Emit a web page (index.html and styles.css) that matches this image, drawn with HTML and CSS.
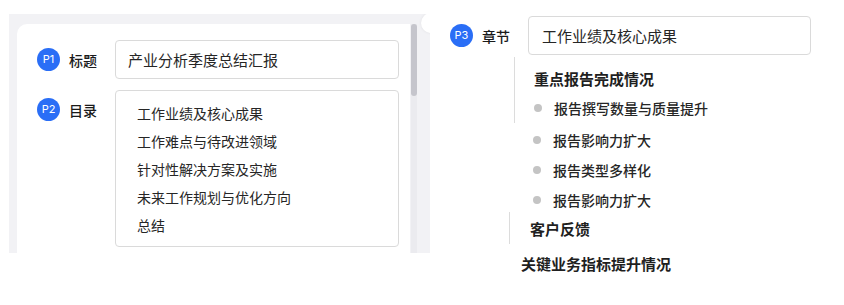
FILE: index.html
```html
<!DOCTYPE html>
<html lang="zh">
<head>
  <meta charset="utf-8">
  <title>报告大纲</title>
  <link rel="stylesheet" href="styles.css">
</head>
<body>
  <div class="page">

    <div class="panel">
      <div class="card">
        <div class="field">
          <div class="field-head">
            <span class="badge">P1</span>
            <span class="field-label">标题</span>
          </div>
          <div class="input">产业分析季度总结汇报</div>
        </div>
        <div class="field">
          <div class="field-head">
            <span class="badge">P2</span>
            <span class="field-label">目录</span>
          </div>
          <ul class="toc">
            <li>工作业绩及核心成果</li>
            <li>工作难点与待改进领域</li>
            <li>针对性解决方案及实施</li>
            <li>未来工作规划与优化方向</li>
            <li>总结</li>
          </ul>
        </div>
      </div>
      <div class="scrollbar"><div class="thumb"></div></div>
      <div class="float-btn"><i></i><i></i><i></i></div>
    </div>

    <div class="chapter">
      <div class="field chapter-field">
        <div class="field-head">
          <span class="badge">P3</span>
          <span class="field-label">章节</span>
        </div>
        <div class="input input-wide">工作业绩及核心成果</div>
      </div>

      <div class="tree-group first">
        <div class="tree-title">重点报告完成情况</div>
        <div class="bullet first-bullet">报告撰写数量与质量提升</div>
      </div>
      <div class="bullet loose second">报告影响力扩大</div>
      <div class="bullet loose">报告类型多样化</div>
      <div class="bullet loose">报告影响力扩大</div>
      <div class="tree-group second-group">
        <div class="tree-sub">客户反馈</div>
      </div>
      <div class="tree-title last">关键业务指标提升情况</div>
    </div>

  </div>
</body>
</html>
```

FILE: styles.css
```css
body {
  margin: 0;
  background: #ffffff;
  color: #222222;
  font-family: "Noto Sans CJK SC", "Noto Sans", sans-serif;
}
.page {
  display: flex;
  align-items: flex-start;
  padding-left: 9px;
}

/* left panel */
.panel {
  position: relative;
  display: flex;
  width: 421px;
  height: 239px;
  margin-top: 14px;
  padding: 10px 0 0 8px;
  box-sizing: border-box;
  background: #f2f2f5;
  overflow: hidden;
}
.card {
  width: 393px;
  height: 260px;
  padding: 16px 11px 0 20px;
  box-sizing: border-box;
  background: #ffffff;
  border-radius: 10px 0 0 0;
}
.scrollbar {
  width: 6px;
  margin-left: 1px;
  background: #ebebef;
}
.thumb {
  height: 72px;
  background: #c5c5cc;
  border-radius: 3px;
}
.float-btn {
  position: absolute;
  left: 412px;
  top: -1px;
  width: 20px;
  height: 20px;
  border-radius: 50%;
  background: #ffffff;
  box-shadow: 0 0 3px rgba(0, 0, 0, 0.08);
  display: flex;
  flex-direction: column;
  align-items: center;
  justify-content: center;
  gap: 2px;
}
.float-btn i {
  display: block;
  width: 1px;
  height: 1px;
  background: #999999;
}

/* fields */
.field {
  display: flex;
  align-items: flex-start;
  margin-bottom: 11px;
}
.field-head {
  display: flex;
  align-items: center;
  gap: 9px;
  width: 78px;
  height: 39px;
  flex-shrink: 0;
}
.badge {
  width: 23px;
  height: 23px;
  border-radius: 50%;
  background: #2a6ef6;
  color: #ffffff;
  font-family: "Inter", "Noto Sans", sans-serif;
  font-size: 11px;
  line-height: 23px;
  text-align: center;
}
.field-label {
  font-size: 14px;
  font-weight: 500;
  color: #1a1a1a;
}
.input {
  width: 284px;
  height: 39px;
  padding-left: 12px;
  box-sizing: border-box;
  border: 1px solid #dadada;
  border-radius: 4px;
  font-size: 15px;
  line-height: 37px;
  color: #262626;
}
.toc {
  width: 284px;
  margin: 0;
  padding: 8px 0 7px 21px;
  box-sizing: border-box;
  list-style: none;
  border: 1px solid #dadada;
  border-radius: 4px;
}
.toc li {
  font-size: 14px;
  line-height: 28px;
  color: #262626;
}

/* chapter side */
.chapter {
  padding: 16px 0 0 20px;
  width: 394px;
}
.chapter-field {
  margin-bottom: 2px;
}
.input-wide {
  width: 283px;
  padding-left: 13px;
}
.tree-group {
  border-left: 1px solid #dcdcdc;
}
.tree-group.first {
  margin-left: 64px;
  height: 66px;
  padding: 11px 0 0 19px;
  box-sizing: border-box;
}
.tree-title {
  font-size: 15px;
  font-weight: 600;
  line-height: 22px;
  color: #1f1f1f;
}
.bullet {
  display: flex;
  align-items: center;
  gap: 12px;
  font-size: 14px;
  font-weight: 500;
  line-height: 22px;
  color: #262626;
}
.bullet::before {
  content: "";
  width: 8px;
  height: 8px;
  border-radius: 50%;
  background: #c4c4c4;
}
.first-bullet {
  margin-top: 7px;
}
.bullet.loose {
  margin: 8px 0 0 83px;
}
.bullet.loose.second {
  margin-top: 6px;
}
.second-group {
  margin: 1px 0 0 59px;
  height: 32px;
  padding: 6px 0 0 20px;
  box-sizing: border-box;
}
.tree-sub {
  font-size: 15px;
  font-weight: 600;
  line-height: 22px;
  color: #1f1f1f;
}
.tree-title.last {
  margin: 9px 0 0 71px;
}
```
